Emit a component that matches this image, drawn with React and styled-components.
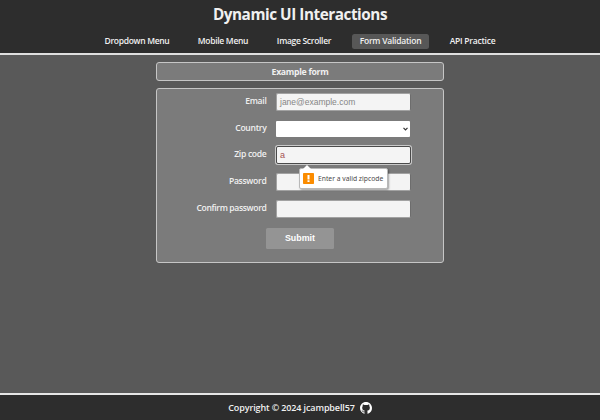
import React from "react";
import styled, { createGlobalStyle } from "styled-components";

const Global = createGlobalStyle`
  * { box-sizing: border-box; }
  body {
    margin: 0;
    background: #595959;
    color: #f0f0f0;
    font-family: "Open Sans", "Noto Sans", sans-serif;
  }
`;

const Page = styled.div`
  height: 420px;
  display: flex;
  flex-direction: column;
  overflow: hidden;
`;

const Header = styled.header`
  height: 55px;
  background: #2d2d2d;
  border-bottom: 2px solid #dfdfdf;
  display: flex;
  flex-direction: column;
  align-items: center;
`;

const Title = styled.h1`
  margin: 4px 0 0;
  height: 20px;
  font-size: 15.3px;
  line-height: 21px;
  font-weight: 700;
  letter-spacing: -0.46px;
  white-space: nowrap;
`;

const Nav = styled.nav`
  display: flex;
  gap: 13px;
  margin-top: 10px;
`;

const NavItem = styled.a`
  width: ${(p) => p.$width}px;
  height: 15px;
  line-height: 14px;
  border-radius: 2.5px;
  display: flex;
  justify-content: center;
  font-size: 8.5px;
  font-weight: 600;
  letter-spacing: ${(p) => p.$spacing ?? -0.3}px;
  white-space: nowrap;
  background: ${(p) => (p.$active ? "#575757" : "transparent")};
`;

const Main = styled.main`
  flex: 1;
  display: flex;
  flex-direction: column;
  align-items: center;
  gap: 7px;
  padding-top: 7px;
`;

const Panel = styled.section`
  width: 288px;
  background: #7b7b7b;
  border: 1px solid #c6c6c6;
  border-radius: 3px;
`;

const Heading = styled(Panel)`
  height: 19px;
  line-height: 18px;
  font-size: 8.7px;
  font-weight: 700;
  letter-spacing: -0.3px;
  text-align: center;
`;

const Form = styled(Panel)`
  height: 175px;
  padding-top: 4px;
  display: flex;
  flex-direction: column;
  align-items: center;
`;

const Fields = styled.div`
  align-self: stretch;
  display: grid;
  grid-template-columns: 109.5px 134.5px;
  grid-template-rows: 18px 17px 18px 18px 18px;
  row-gap: 9px;
  column-gap: 9.5px;
`;

const Label = styled.label`
  height: 17px;
  line-height: 17px;
  text-align: right;
  font-size: 8.6px;
  font-weight: 600;
  letter-spacing: ${(p) => p.$spacing ?? -0.3}px;
  white-space: nowrap;
`;

const Input = styled.div`
  position: relative;
  height: 18px;
  border: 1px solid #a2a2a2;
  border-right-color: #6d6d6d;
  border-radius: 2px;
  background: #f4f4f4;
  padding-left: 3px;
  font: 8.5px/16px "Liberation Sans", sans-serif;
  color: #858585;
`;

const FocusedInput = styled(Input)`
  height: 18px;
  border: 1px solid #4a4a4a;
  box-shadow: 0 0 0 1px #c9c9c9;
  font-size: 9px;
  color: #a45252;
`;

const Select = styled(Input)`
  width: 134px;
  height: 16px;
  margin-top: 1px;
  border: 0;
  border-radius: 1px;
  background: #fff;
  display: flex;
  align-items: center;
  justify-content: flex-end;
  padding-right: 2px;
`;

const Submit = styled.button`
  width: 68px;
  height: 21px;
  margin: 10px 0 0;
  padding: 0;
  border: 0;
  border-radius: 1.5px;
  background: #949494;
  color: #fff;
  font: bold 8.9px/21px "Liberation Sans", sans-serif;
`;

const Tooltip = styled.div`
  position: absolute;
  z-index: 1;
  left: 22px;
  top: 21px;
  width: 89px;
  height: 21px;
  border: 1px solid #b9b9b9;
  border-radius: 2px;
  background: #fff;
  box-shadow: 1px 1px 2px rgba(0, 0, 0, 0.35);
  display: flex;
  align-items: center;
  gap: 4px;
  padding-left: 3px;
  color: #4a4a4a;
  font: 6.75px/19px "Noto Sans", sans-serif;
  white-space: nowrap;

  &::before {
    content: "";
    position: absolute;
    left: 3px;
    top: -4px;
    border: solid transparent;
    border-width: 0 4px 4px;
    border-bottom-color: #fff;
  }
`;

const Footer = styled.footer`
  height: 27px;
  border-top: 2px solid #e6e6e6;
  background: #2d2d2d;
  display: flex;
  align-items: center;
  justify-content: center;
  gap: 5px;
  font-size: 9px;
  font-weight: 600;
  letter-spacing: -0.12px;
  white-space: nowrap;
`;

const links = [
  { text: "Dropdown Menu", width: 80, spacing: -0.32 },
  { text: "Mobile Menu", width: 66 },
  { text: "Image Scroller", width: 70 },
  { text: "Form Validation", width: 77, active: true, spacing: -0.24 },
  { text: "API Practice", width: 61, spacing: -0.24 },
];

function Chevron() {
  return (
    <svg width="5" height="4" viewBox="0 0 5 4">
      <path d="M0.5 0.8 L2.5 2.8 L4.5 0.8" fill="none" stroke="#333" strokeWidth="1.2" />
    </svg>
  );
}

function WarningIcon() {
  return (
    <svg width="11" height="11" viewBox="0 0 11 11">
      <rect width="11" height="11" rx="0.7" fill="#fb8c00" />
      <path d="M4.5 1.9h2v4.5h-2zM4.5 7.3h2v1.8h-2z" fill="#fff" />
    </svg>
  );
}

function GitHubIcon() {
  return (
    <svg width="12" height="12" viewBox="0 0 16 16" fill="#fff">
      <path d="M8 0C3.58 0 0 3.58 0 8c0 3.54 2.29 6.53 5.47 7.59.4.07.55-.17.55-.38 0-.19-.01-.82-.01-1.49-2.01.37-2.53-.49-2.69-.94-.09-.23-.48-.94-.82-1.13-.28-.15-.68-.52-.01-.53.63-.01 1.08.58 1.23.82.72 1.21 1.87.87 2.33.66.07-.52.28-.87.51-1.07-1.78-.2-3.64-.89-3.64-3.95 0-.87.31-1.59.82-2.15-.08-.2-.36-1.02.08-2.12 0 0 .67-.21 2.2.82.64-.18 1.32-.27 2-.27s1.36.09 2 .27c1.53-1.04 2.2-.82 2.2-.82.44 1.1.16 1.92.08 2.12.51.56.82 1.27.82 2.15 0 3.07-1.87 3.75-3.65 3.95.29.25.54.73.54 1.48 0 1.07-.01 1.93-.01 2.2 0 .21.15.46.55.38A8.01 8.01 0 0 0 16 8c0-4.42-3.58-8-8-8z" />
    </svg>
  );
}

export default function App() {
  return (
    <Page>
      <Global />
      <Header>
        <Title>Dynamic UI Interactions</Title>
        <Nav>
          {links.map((l) => (
            <NavItem key={l.text} $width={l.width} $spacing={l.spacing} $active={l.active}>
              {l.text}
            </NavItem>
          ))}
        </Nav>
      </Header>
      <Main>
        <Heading>Example form</Heading>
        <Form>
          <Fields>
            <Label>Email</Label>
            <Input>jane@example.com</Input>
            <Label>Country</Label>
            <Select><Chevron /></Select>
            <Label>Zip code</Label>
            <FocusedInput>
              a
              <Tooltip><WarningIcon />Enter a valid zipcode</Tooltip>
            </FocusedInput>
            <Label>Password</Label>
            <Input />
            <Label $spacing={-0.36}>Confirm password</Label>
            <Input />
          </Fields>
          <Submit>Submit</Submit>
        </Form>
      </Main>
      <Footer>
        Copyright © 2024 jcampbell57
        <GitHubIcon />
      </Footer>
    </Page>
  );
}
